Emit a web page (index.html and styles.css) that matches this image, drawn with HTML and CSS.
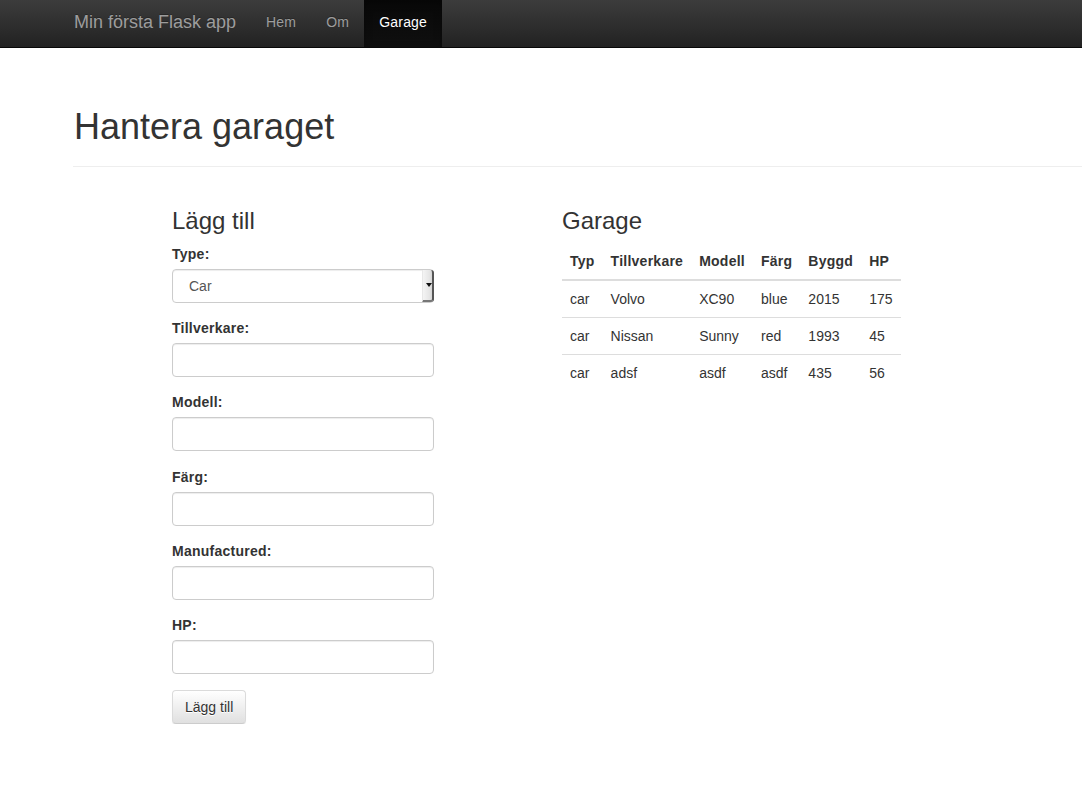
FILE: index.html
```html
<!DOCTYPE html>
<html lang="sv">
<head>
<meta charset="utf-8">
<title>Hantera garaget</title>
<link rel="stylesheet" href="styles.css">
</head>
<body>
<nav class="navbar">
  <div class="navbar-inner">
    <a class="brand" href="#">Min första Flask app</a>
    <ul class="nav">
      <li><a href="#">Hem</a></li>
      <li><a href="#">Om</a></li>
      <li class="active"><a href="#">Garage</a></li>
    </ul>
  </div>
</nav>
<main class="main">
  <div class="page-header">
    <h1>Hantera garaget</h1>
  </div>
  <div class="row">
    <section class="col col-form">
      <h3>Lägg till</h3>
      <form>
        <div class="form-group">
          <label>Type:</label>
          <div class="select-wrap">
            <select class="form-control select"><option>Car</option></select>
            <span class="select-arrow"><span class="tri"></span></span>
          </div>
        </div>
        <div class="form-group">
          <label>Tillverkare:</label>
          <input class="form-control" type="text">
        </div>
        <div class="form-group">
          <label>Modell:</label>
          <input class="form-control" type="text">
        </div>
        <div class="form-group">
          <label>Färg:</label>
          <input class="form-control" type="text">
        </div>
        <div class="form-group">
          <label>Manufactured:</label>
          <input class="form-control" type="text">
        </div>
        <div class="form-group">
          <label>HP:</label>
          <input class="form-control" type="text">
        </div>
        <button class="btn" type="button">Lägg till</button>
      </form>
    </section>
    <section class="col col-table">
      <h3>Garage</h3>
      <table class="table">
        <thead>
          <tr><th>Typ</th><th>Tillverkare</th><th>Modell</th><th>Färg</th><th>Byggd</th><th>HP</th></tr>
        </thead>
        <tbody>
          <tr><td>car</td><td>Volvo</td><td>XC90</td><td>blue</td><td>2015</td><td>175</td></tr>
          <tr><td>car</td><td>Nissan</td><td>Sunny</td><td>red</td><td>1993</td><td>45</td></tr>
          <tr><td>car</td><td>adsf</td><td>asdf</td><td>asdf</td><td>435</td><td>56</td></tr>
        </tbody>
      </table>
    </section>
  </div>
</main>
</body>
</html>
```
FILE: styles.css
```css
* { box-sizing: border-box; }
html, body { margin: 0; padding: 0; }
body {
  font-family: "Liberation Sans", Arial, sans-serif;
  font-size: 14px;
  line-height: 20px;
  color: #333;
  background: #fff;
  overflow-x: hidden;
}
a { text-decoration: none; }

.navbar {
  height: 48px;
  background: linear-gradient(to bottom, #3c3c3c 0%, #222 100%);
  border-bottom: 1px solid #080808;
}
.navbar-inner {
  display: flex;
  align-items: stretch;
  height: 47px;
  padding-left: 59px;
}
.brand {
  font-size: 18px;
  line-height: 20px;
  color: #9d9d9d;
  padding: 12px 15px 15px 15px;
  text-shadow: 0 -1px 0 rgba(0,0,0,.25);
}
.nav {
  list-style: none;
  margin: 0;
  padding: 0;
  display: flex;
}
.nav a {
  display: block;
  height: 47px;
  padding: 12px 15px 15px;
  color: #9d9d9d;
  letter-spacing: 0.2px;
  text-shadow: 0 -1px 0 rgba(0,0,0,.25);
}
.nav .active a {
  color: #fff;
  background: linear-gradient(to bottom, #080808 0%, #0f0f0f 100%);
  box-shadow: inset 0 3px 9px rgba(0,0,0,.25);
}

.main {
  padding-left: 73px;
  padding-top: 59px;
}
.page-header {
  padding-bottom: 9px;
  border-bottom: 1px solid #eee;
  margin-bottom: 21px;
}
h1 {
  margin: 0 0 10px;
  font-size: 36px;
  font-weight: 500;
  line-height: 39.6px;
  color: #333;
  padding-left: 1px;
}
h3 {
  margin: 20px 0 10px;
  font-size: 24px;
  font-weight: 500;
  line-height: 26.4px;
  color: #333;
}

.row {
  display: flex;
  align-items: flex-start;
}
.col-form {
  margin-left: 99px;
  width: 262px;
}
.col-table {
  margin-left: 128px;
}

.form-group { margin-bottom: 15.35px; }
label {
  display: block;
  font-weight: bold;
  letter-spacing: 0.25px;
  margin-bottom: 5px;
}
.col-form h3 { margin-bottom: 9.6px; }
.form-control {
  display: block;
  width: 100%;
  height: 34px;
  padding: 6px 12px;
  font-family: inherit;
  font-size: 14px;
  line-height: 20px;
  color: #555;
  background: #fff;
  border: 1px solid #ccc;
  border-radius: 4px;
  box-shadow: inset 0 1px 1px rgba(0,0,0,.075);
  margin: 0;
}
.select-wrap { position: relative; }
.select {
  -webkit-appearance: none;
  appearance: none;
  padding-left: 16px;
}
.select-arrow {
  position: absolute;
  right: 0;
  top: 1px;
  width: 12px;
  height: 32px;
  background: linear-gradient(to right, #f4f4f4 0%, #e6e6e6 70%, #d4d4d4 100%);
  border-right: 2px solid #555;
  border-bottom: 2px solid #777;
  border-left: 1px solid #e8e8e8;
  border-radius: 0 3px 3px 0;
  display: flex;
  align-items: center;
  justify-content: center;
}
.tri {
  width: 0;
  height: 0;
  border-left: 3px solid transparent;
  border-right: 3px solid transparent;
  border-top: 4px solid #111;
  margin-left: 2px;
}

.btn {
  display: inline-block;
  height: 34px;
  padding: 6px 12px;
  font-family: inherit;
  font-size: 14px;
  line-height: 20px;
  color: #333;
  background: linear-gradient(to bottom, #fff 0%, #e0e0e0 100%);
  border: 1px solid #ccc;
  border-color: #dbdbdb #dbdbdb #ccc;
  border-radius: 4px;
  text-shadow: 0 1px 0 #fff;
  box-shadow: inset 0 1px 0 rgba(255,255,255,.15), 0 1px 1px rgba(0,0,0,.075);
  margin-top: 0;
}

.table {
  border-collapse: collapse;
  border-spacing: 0;
  margin-top: -1px;
  margin-bottom: 20px;
}
.table th, .table td {
  padding: 8px;
  line-height: 20px;
  text-align: left;
  vertical-align: top;
  white-space: nowrap;
}
.table th {
  font-weight: bold;
  letter-spacing: 0.25px;
  border-bottom: 2px solid #ddd;
  vertical-align: bottom;
}
.table td { border-top: 1px solid #ddd; }
.table tbody tr:first-child td { border-top: 0; }
```
